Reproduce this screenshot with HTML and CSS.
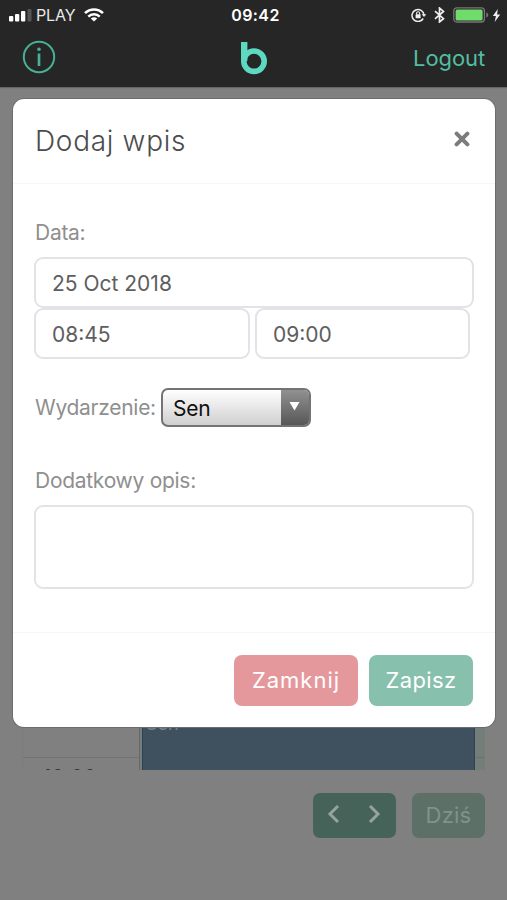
FILE: index.html
```html
<!DOCTYPE html>
<html lang="pl">
<head>
<meta charset="utf-8">
<meta name="viewport" content="width=device-width">
<title>Dodaj wpis</title>
<link rel="stylesheet" href="styles.css">
</head>
<body>
<div class="app">
  <header class="top">
    <div class="status">
      <div class="carrier">
        <svg width="23" height="14" viewBox="0 0 23 14"><g fill="#fff"><rect y="8" width="4.3" height="5.5" rx="1"/><rect x="6" y="6" width="4.3" height="7.5" rx="1"/><rect x="12" y="3" width="4.3" height="10.5" rx="1"/></g><rect x="18.5" y="1" width="4" height="12.5" rx="1" fill="#555"/></svg>
        <span class="network">PLAY</span>
        <svg class="wifi" width="20" height="14" viewBox="0 0 20 14" fill="none" stroke="#fff" stroke-width="2.5"><path d="M1 5.2C6 .1 14 .1 19 5.2M4.3 8.6c3.2-3.1 8.2-3.1 11.4 0"/><path d="M10 13.5 6.8 10.4c1.8-1.6 4.6-1.6 6.4 0z" fill="#fff" stroke="none"/></svg>
      </div>
      <span class="clock">09:42</span>
      <div class="system">
        <svg width="16" height="14" viewBox="0 0 16 14" fill="none" stroke="#eee" stroke-width="1.5"><path d="M12.2 10.5A6 6 0 1 1 13 7"/><path d="M10.7 6.3h4.6L13 9z" fill="#eee" stroke="none"/><rect x="4.6" y="6.3" width="5" height="4" rx=".5" fill="#eee" stroke="none"/><path d="M5.6 6.5V5.3a1.5 1.5 0 0 1 3 0v1.2" stroke-width="1.1"/></svg>
        <svg class="bluetooth" width="11" height="16" viewBox="0 0 11 16" fill="none" stroke="#eee" stroke-width="1.7"><path d="m1 4.2 8.5 7.5L5.5 15V1l4 3.4L1 11.8"/></svg>
        <svg class="battery" width="36" height="16" viewBox="0 0 36 16"><rect x=".8" y=".8" width="30.6" height="14.2" rx="3" fill="none" stroke="#777" stroke-width="1.3"/><rect x="2.6" y="2.6" width="27" height="10.8" rx="1.5" fill="#6fdc6b"/><path d="M33.3 5.5c2.6.5 2.6 4.5 0 5z" fill="#777"/></svg>
        <svg width="9" height="13" viewBox="0 0 9 13"><path d="M5.8 0 .8 7h3.1L2.7 13 8.2 5.5H5.1z" fill="#eee"/></svg>
      </div>
    </div>
    <nav class="nav">
      <svg class="info" width="34" height="34" viewBox="0 0 34 34" fill="none" stroke="#46b194"><circle cx="17" cy="17" r="15.2" stroke-width="2"/><path d="M17 13.5V26" stroke-width="2.7"/><circle cx="17" cy="9.3" r="1.8" fill="#46b194" stroke="none"/></svg>
      <svg class="logo" width="28" height="34" viewBox="0 0 28 34" fill="none" stroke="#5dd9c1"><circle cx="14" cy="20.2" r="10.2" stroke-width="5.6"/><path d="M4.2 1v19" stroke-width="6.4"/></svg>
      <a class="logout">Logout</a>
    </nav>
  </header>
  <main class="page">
    <section class="calendar">
      <div class="hours"><div class="row"></div><div class="row hour">10:00</div></div>
      <div class="day"><div class="event">Sen</div><div class="rest"></div></div>
    </section>
    <div class="tools">
      <div class="arrows">
        <svg width="14" height="20" viewBox="0 0 14 20"><path d="m11 2-8 8 8 8"/></svg>
        <svg width="14" height="20" viewBox="0 0 14 20"><path d="m3 2 8 8-8 8"/></svg>
      </div>
      <div class="today">Dziś</div>
    </div>
  </main>
  <div class="modal">
    <div class="modal-head">
      <h1>Dodaj wpis</h1>
      <svg width="16" height="16" viewBox="0 0 16 16"><path d="m2.6 2.6 10.8 10.8m0-10.8L2.6 13.4" stroke="#7c7c7c" stroke-width="4" stroke-linecap="round"/></svg>
    </div>
    <div class="modal-body">
      <label class="label-date">Data:</label>
      <div class="field date">25 Oct 2018</div>
      <div class="times"><div class="field">08:45</div><div class="field">09:00</div></div>
      <div class="kind">
        <label class="label-kind">Wydarzenie:</label>
        <div class="select"><span>Sen</span><i><svg width="11" height="9" viewBox="0 0 11 9"><path d="M.5 0h10l-5 8.5z" fill="#fff"/></svg></i></div>
      </div>
      <label class="label-note">Dodatkowy opis:</label>
      <div class="field note"></div>
    </div>
    <div class="modal-foot">
      <div class="btn close">Zamknij</div>
      <div class="btn save">Zapisz</div>
    </div>
  </div>
</div>
</body>
</html>
```
FILE: styles.css
```css
* { box-sizing: border-box; }
body { margin: 0; font-family: Inter, "Liberation Sans", sans-serif; }
svg { display: block; flex: none; }
.app { position: relative; width: 507px; height: 900px; overflow: hidden; background: #808080; }

.top { height: 87px; background: #262626; color: #fff; box-shadow: 0 1px 1px #666; }
.status { display: grid; grid-template-columns: 1fr auto 1fr; align-items: center; height: 30px; padding: 0 6px 0 9px; }
.carrier, .system { display: flex; align-items: center; }
.system { justify-content: flex-end; }
.network { margin: 0 8px 0 4px; font-size: 16px; color: #e8e8e8; letter-spacing: -.1px; }
.clock { padding-left: 1px; font-size: 16px; font-weight: 600; letter-spacing: .4px; }
.bluetooth { margin: 0 8px 0 7px; }
.battery { margin-right: 3px; }
.nav { display: grid; grid-template-columns: 1fr auto 1fr; align-items: center; height: 54px; padding: 0 22px; }
.logo { margin-top: 1px; }
.logout { justify-self: end; padding-top: 1px; font-size: 22px; color: #52bea2; letter-spacing: -.1px; }

.page { display: flex; flex-direction: column; height: 813px; padding-top: 30px; }
.calendar { display: flex; height: 653px; margin: 0 22px; overflow: hidden; }
.hours { width: 118px; border-right: 1px solid #696969; border-left: 1px solid #7c7c7c; }
.row { height: 641px; border-bottom: 1px solid #727272; }
.hour { padding: 7px 0 0 20px; font-size: 20px; letter-spacing: .4px; line-height: 24px; color: #333; }
.day { display: flex; flex: 1; padding-left: 2px; background: #747e79; }
.event { width: 333px; padding: 593px 0 0 3px; border: solid #2d4353; border-width: 0 1px; background: #3f515e; color: #79838c; font-size: 18px; line-height: 28px; }
.rest { flex: 1; height: 641px; border-bottom: 1px solid #67736d; }
.tools { display: flex; justify-content: flex-end; gap: 16px; padding: 23px 22px 0 0; }
.arrows, .today { display: flex; align-items: center; justify-content: center; height: 45px; border-radius: 7px; }
.arrows { gap: 26px; width: 83px; padding: 0 2px 3px 0; background: #456358; }
.arrows path { fill: none; stroke: #98a39e; stroke-width: 3; }
.today { width: 73px; padding-bottom: 2px; background: #5c7067; color: #82918a; font-size: 22px; letter-spacing: .2px; }

.modal { position: absolute; top: 99px; left: 13px; width: 482px; height: 628px; border-radius: 11px; background: #fff; box-shadow: 0 0 0 1px #6d6d6d; }
.modal-head { display: flex; justify-content: space-between; height: 85px; padding: 25px 25px 0 22px; border-bottom: 1px solid #f6f6f6; }
.modal-head svg { margin-top: 7px; }
h1 { margin: 0; font-size: 28px; line-height: 34px; font-weight: 300; letter-spacing: .7px; color: #4c4c4c; }
.modal-body { height: 448px; padding: 36px 21px 0; }
label { display: block; padding-left: 1px; font-size: 21px; line-height: 26px; letter-spacing: -.28px; color: #8f8f8f; }
.field { display: flex; align-items: center; height: 51px; padding: 2px 0 0 16px; border: 2px solid #e2e3e6; border-radius: 9px; color: #5e5e5e; font-size: 21px; }
.date { margin-top: 11px; }
.times { display: grid; grid-template-columns: 216px 215px; gap: 5px; }
.kind { display: flex; align-items: center; gap: 5px; margin-top: 29px; }
.select { display: flex; width: 150px; height: 39px; border: 2px solid #737373; border-radius: 7px; overflow: hidden; background: linear-gradient(#fff, #cfcfcf); color: #111; font-size: 21px; letter-spacing: -.2px; }
.select span { flex: 1; padding-left: 10px; line-height: 37px; }
.select i { display: flex; justify-content: center; align-items: center; width: 28px; padding-bottom: 2px; background: linear-gradient(#919191, #575757); }
.label-note { margin-top: 41px; }
.note { height: 84px; margin-top: 11px; }
.modal-foot { display: flex; justify-content: flex-end; gap: 11px; padding: 22px 22px 0; border-top: 1px solid #f6f6f6; }
.btn { display: flex; align-items: center; justify-content: center; height: 51px; padding-bottom: 2px; border-radius: 8px; color: #fff; font-size: 22px; letter-spacing: .4px; }
.close { width: 124px; letter-spacing: 1px; background: #e5989c; }
.save { width: 104px; background: #87c0ac; }
```
